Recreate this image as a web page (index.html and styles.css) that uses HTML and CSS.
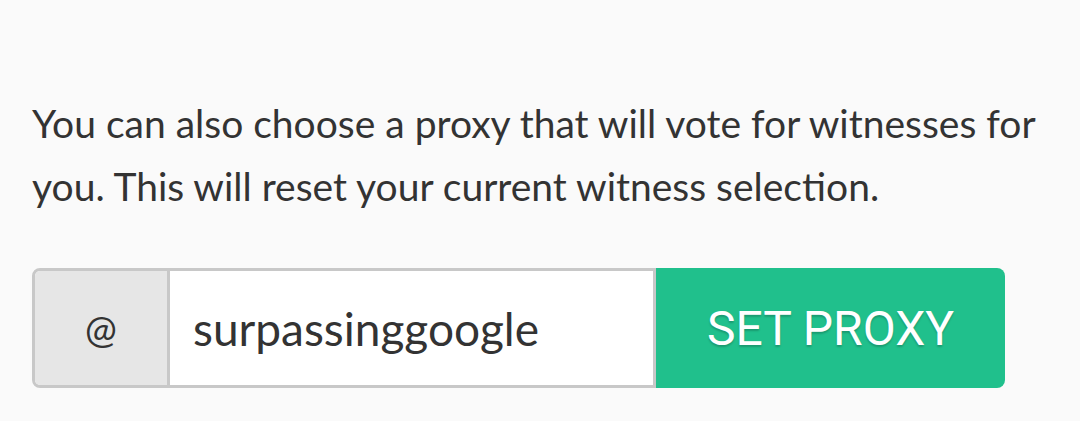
FILE: index.html
```html
<!DOCTYPE html>
<html>
<head>
<meta charset="utf-8">
<link rel="stylesheet" href="styles.css">
</head>
<body>
<div class="panel">
  <p class="intro">You can also choose a proxy that will vote for witnesses for you. This will reset your current witness selection.</p>
  <div class="proxy-form">
    <div class="input-group">
      <span class="addon">@</span>
      <input class="field" type="text" value="surpassinggoogle">
    </div>
    <button class="btn" type="button">SET PROXY</button>
  </div>
</div>
</body>
</html>
```

FILE: styles.css
```css
html, body {
  margin: 0;
  padding: 0;
  background: #fafafa;
}
.panel {
  padding: 92px 0 0 32px;
  width: 1016px;
}
.intro {
  margin: 0;
  font-family: Lato, "Source Sans Pro", sans-serif;
  font-size: 39px;
  line-height: 63px;
  color: #333333;
}
.proxy-form {
  display: flex;
  margin-top: 50px;
  width: 973px;
  height: 120px;
}
.input-group {
  display: flex;
  flex: 0 0 624px;
  border: 3px solid #c8c8c8;
  border-radius: 8px 0 0 8px;
  overflow: hidden;
  box-sizing: border-box;
}
.addon {
  flex: 0 0 132px;
  display: flex;
  align-items: center;
  justify-content: center;
  background: #e6e6e6;
  border-right: 3px solid #c8c8c8;
  font-family: Lato, sans-serif;
  font-size: 38px;
  color: #333333;
}
.field {
  flex: 1;
  min-width: 0;
  border: 0;
  outline: 0;
  background: #ffffff;
  padding: 0 0 0 23px;
  margin: 0;
  font-family: Lato, sans-serif;
  font-size: 46px;
  color: #333333;
}
.btn {
  flex: 1;
  border: 0;
  margin: 0;
  border-radius: 0 8px 8px 0;
  background: #20c08c;
  color: #ffffff;
  font-family: Roboto, sans-serif;
  font-size: 48px;
  text-shadow: 0 2px 2px rgba(0,0,0,0.2);
  padding: 0;
}
```
